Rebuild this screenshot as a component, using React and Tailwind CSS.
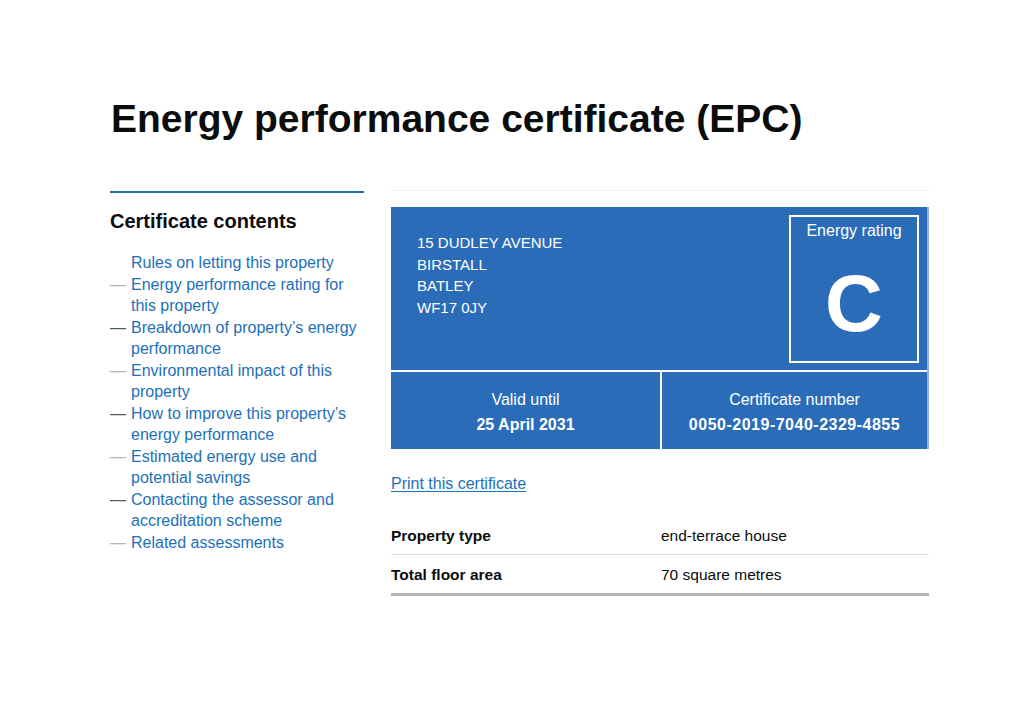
import React from "react";

const contents = [
  { label: "Rules on letting this property", dash: "" },
  { label: "Energy performance rating for this property", dash: "light" },
  { label: "Breakdown of property’s energy performance", dash: "dark" },
  { label: "Environmental impact of this property", dash: "light" },
  { label: "How to improve this property’s energy performance", dash: "dark" },
  { label: "Estimated energy use and potential savings", dash: "light" },
  { label: "Contacting the assessor and accreditation scheme", dash: "dark" },
  { label: "Related assessments", dash: "light" },
];

const App = () => {
  return (
    <div
      className="w-[1024px] h-[724px] bg-white text-[#0b0c0c] overflow-hidden"
      style={{ fontFamily: '"Liberation Sans", Arial, sans-serif' }}
    >
      <div className="pl-[111px] pt-[96px]">
        <h1 className="text-[39px] leading-[46px] font-bold">
          Energy performance certificate (EPC)
        </h1>
      </div>

      <div className="flex pl-[110px] pt-[49px]">
        {/* Contents */}
        <div className="w-[254px] border-t-2 border-[#1d70b8] pt-[16px]">
          <h2 className="text-[20px] leading-[24px] font-bold">Certificate contents</h2>
          <ul className="mt-[19px] text-[16px] leading-[21.5px] text-[#1d70b8]">
            {contents.map((item) => (
              <li key={item.label} className="flex">
                <span
                  className={`w-[21px] shrink-0 ${
                    item.dash === "dark"
                      ? "text-[#505a5f]"
                      : item.dash === "light"
                      ? "text-[#b1b4b6]"
                      : "text-transparent"
                  }`}
                >
                  —
                </span>
                <span>{item.label}</span>
              </li>
            ))}
          </ul>
        </div>

        {/* Main */}
        <div className="ml-[27px] w-[538px] -mt-[1px] border-t border-[#f3f2f1] pt-[16px]">
          <div className="bg-[#2b6cb9] text-white border-r-2 border-[#8fb4e0]">
            <div className="flex h-[165px] border-b-2 border-white">
              <div className="flex-1 pl-[26px] pt-[25px] text-[15px] leading-[21.5px] uppercase">
                <p>15 Dudley Avenue</p>
                <p>Birstall</p>
                <p>Batley</p>
                <p>WF17 0JY</p>
              </div>
              <div className="mt-[8px] mr-[8px] w-[130px] h-[148px] border-2 border-white flex flex-col items-center">
                <p className="text-[16px] leading-[18px] mt-[5px]">Energy rating</p>
                <p className="text-[80px] leading-[80px] font-bold mt-[24px]">C</p>
              </div>
            </div>
            <div className="flex h-[77px]">
              <div className="w-[271px] border-r-2 border-white flex flex-col items-center pt-[16px]">
                <p className="text-[16px] leading-[24px]">Valid until</p>
                <p className="text-[16px] leading-[26px] font-bold">25 April 2031</p>
              </div>
              <div className="flex-1 flex flex-col items-center pt-[16px]">
                <p className="text-[16px] leading-[24px]">Certificate number</p>
                <p className="text-[16px] leading-[26px] font-bold tracking-[0.5px]">
                  0050-2019-7040-2329-4855
                </p>
              </div>
            </div>
          </div>

          <a
            href="#"
            className="inline-block mt-[25px] text-[16px] leading-[20px] text-[#1d70b8] underline underline-offset-2"
          >
            Print this certificate
          </a>

          <dl className="mt-[20px] text-[15.5px] leading-[20px]">
            <div className="flex pt-[10px] pb-[8px] border-b border-[#dcdcdc]">
              <dt className="w-[270px] font-bold">Property type</dt>
              <dd>end-terrace house</dd>
            </div>
            <div className="flex pt-[10px] pb-[8px] border-b-[3px] border-[#b1b4b6]">
              <dt className="w-[270px] font-bold">Total floor area</dt>
              <dd>70 square metres</dd>
            </div>
          </dl>
        </div>
      </div>
    </div>
  );
};

export default App;
